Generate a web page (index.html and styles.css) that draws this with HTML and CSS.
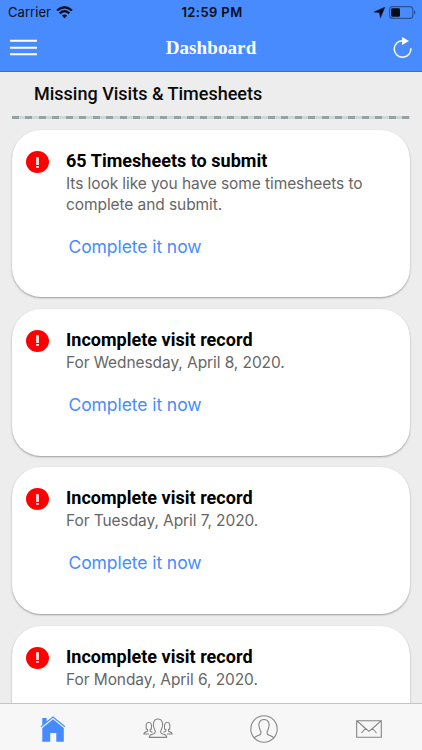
FILE: index.html
```html
<!DOCTYPE html>
<html lang="en">
<head>
<meta charset="utf-8">
<title>Dashboard</title>
<link rel="stylesheet" href="styles.css">
</head>
<body>
<div class="screen">
  <header class="header">
    <div class="status">
      <div class="status-left"><span class="carrier">Carrier</span>
        <svg class="wifi" width="17" height="13" viewBox="0 0 17 13" fill="none" stroke="#050b18" stroke-width="2.3"><path d="M1 4.5Q8.5-2 16 4.5M3.7 7.3Q8.5 3 13.3 7.3"/><path d="M8.5 12.3 5.8 9.6Q8.5 7.3 11.2 9.6Z" fill="#050b18" stroke="none"/></svg>
      </div>
      <span class="time">12:59 PM</span>
      <div class="status-right">
        <svg width="11" height="11" viewBox="0 0 11 11"><path d="M10.8.2 6.4 10.8 5.5 5.6.1 5Z" fill="#050b18" stroke="#050b18" stroke-width=".5"/></svg>
        <svg width="27" height="13" viewBox="0 0 27 13"><rect x=".6" y=".6" width="23.2" height="11.8" rx="3" fill="none" stroke="#2d538f" stroke-width="1.1"/><rect x="2.2" y="2.3" width="8.8" height="8.4" rx="1.3" fill="#050b18"/><path d="M25 4.3q3 2.2 0 4.4z" fill="#2d538f"/></svg>
      </div>
    </div>
    <div class="nav">
      <svg class="menu" width="27" height="17" viewBox="0 0 27 17" stroke="#fff" stroke-width="2"><path d="M0 1.7h27M0 8.7h27M0 15.3h27"/></svg>
      <h1 class="title">Dashboard</h1>
      <svg class="refresh" width="19" height="21" viewBox="0 0 19 21"><path d="M10.3 3.7A8.3 8.3 0 1 0 17.8 11.2" fill="none" stroke="#fff" stroke-width="1.5"/><path d="M9 0 16 4 9 8Z" fill="#fff"/></svg>
    </div>
  </header>
  <main class="content">
    <h2 class="heading"><span>Missing Visits &amp; Timesheets</span></h2>
    <div class="rule"></div>
    <section class="card card-tall">
      <span class="alert"><i class="bang"></i></span>
      <div class="body">
        <h3 class="name">65 Timesheets to submit</h3>
        <p class="text">Its look like you have some timesheets to<br>complete and submit.</p>
        <a class="link">Complete it now</a>
      </div>
    </section>
    <section class="card">
      <span class="alert"><i class="bang"></i></span>
      <div class="body">
        <h3 class="name">Incomplete visit record</h3>
        <p class="text">For Wednesday, April 8, 2020.</p>
        <a class="link">Complete it now</a>
      </div>
    </section>
    <section class="card">
      <span class="alert"><i class="bang"></i></span>
      <div class="body">
        <h3 class="name">Incomplete visit record</h3>
        <p class="text">For Tuesday, April 7, 2020.</p>
        <a class="link">Complete it now</a>
      </div>
    </section>
    <section class="card">
      <span class="alert"><i class="bang"></i></span>
      <div class="body">
        <h3 class="name">Incomplete visit record</h3>
        <p class="text">For Monday, April 6, 2020.</p>
      </div>
    </section>
  </main>
  <footer class="tabs">
    <div class="tab"><svg width="26" height="26" viewBox="0 0 26 26"><path d="M1 10.7 13 1 25 10.7" fill="none" stroke="#458aff" stroke-width="1.1"/><path d="M2.3 2h4.3v3.8L2.3 9.2ZM13 3.3 23.8 12V25.8H16.3V17H10.2V25.8H2.3V12Z" fill="#458aff"/></svg></div>
    <div class="tab"><svg width="30" height="21" viewBox="0 0 30 21" fill="none" stroke="#858585" stroke-width="1.1" stroke-linejoin="round"><path d="M6.2 19.4C6.5 16 8.5 16.8 11.4 15.4 12.7 14.7 12.5 13 11.7 11.7 9.2 7.5 10 1 15 1S20.8 7.5 18.3 11.7C17.5 13 17.3 14.7 18.6 15.4 21.5 16.8 23.5 16 23.8 19.4Z"/><path d="M6 16H.8C1 13.7 2.7 14.2 4.5 13.3V11.2H3.3C3 7.5 2.8 4.2 5.8 4.2S8.7 7.5 8.4 11.2H7.2V13.3L9.5 14.2M24 16H29.2C29 13.7 27.3 14.2 25.5 13.3V11.2H26.7C27 7.5 27.2 4.2 24.2 4.2S21.3 7.5 21.6 11.2H22.8V13.3L20.5 14.2"/></svg></div>
    <div class="tab"><svg width="28" height="28" viewBox="0 0 28 28" fill="none" stroke="#858585" stroke-width="1.1"><circle cx="14" cy="14" r="13.2"/><path d="M4.3 22.8C5.5 21 9.2 20.8 10.6 19.2 11.4 18 10.8 16.5 10.1 15 7.8 10 8.7 4.5 14 4.5S20.2 10 17.9 15C17.2 16.5 16.6 18 17.4 19.2 18.8 20.8 22.5 21 23.7 22.8"/></svg></div>
    <div class="tab"><svg width="26" height="18" viewBox="0 0 26 18" fill="none" stroke="#858585" stroke-width="1.1"><path d="M.7.7H25.3V17.3H.7ZM.7.7 9 8 13 11.3 17 8 25.3.7M9.5 8.5 5.5 13M16.5 8.5 20.5 13"/></svg></div>
  </footer>
</div>
</body>
</html>
```
FILE: styles.css
```css
* { box-sizing: border-box; }
body { margin: 0; }
h1, h2, h3, p { margin: 0; }
svg { display: block; flex: none; }
.screen { width: 422px; height: 750px; overflow: hidden; display: flex; flex-direction: column; background: #ededed; font-family: Roboto, "Liberation Sans", sans-serif; }
.header { height: 72px; flex: none; background: #488bff; border-bottom: 1px solid #3c70c8; }
.status { height: 24px; display: grid; grid-template-columns: 1fr auto 1fr; align-items: center; padding: 0 6px 0 8px; color: #050b18; font-family: Inter, sans-serif; font-size: 13px; }
.status-left { display: flex; align-items: center; gap: 5px; }
.status-right { display: flex; align-items: center; justify-content: flex-end; gap: 4px; }
.carrier { letter-spacing: .05px; }
.time { font-weight: 600; letter-spacing: .4px; }
.nav { height: 47px; display: grid; grid-template-columns: 1fr auto 1fr; align-items: center; padding: 0 10px 0 10px; }
.title { font: bold 19px/22px "Liberation Serif", serif; color: #fff; letter-spacing: .1px; }
.refresh { justify-self: end; margin-top: -1px; }
.content { flex: 1; min-height: 0; overflow: hidden; padding: 0 12px; }
.heading { height: 44px; padding-left: 22px; font-size: 18px; line-height: 44px; font-weight: 500; color: #0a0a0a; }
.rule { height: 3px; margin: 0 0 11px; background: repeating-linear-gradient(90deg, #98a2a4 0 7px, #d0d6d6 7px 13.46px); }
.card { display: flex; height: 147px; margin-bottom: 11.5px; padding: 20px 14px 0; border-radius: 29px; background: #fff; box-shadow: 0 1px 2px rgba(0,0,0,.35); }
.card-tall { height: 167px; }
.alert { width: 23px; height: 22px; margin: 1px 17px 0 0; border-radius: 50%; background: #fe0000; display: flex; align-items: center; justify-content: center; flex: none; }
.bang { width: 3px; height: 11px; border-radius: 1px; background: linear-gradient(#ffd0d0 0 8px, #fe0000 8px 9px, #ffd0d0 9px); }
.body { display: flex; flex-direction: column; align-items: flex-start; white-space: nowrap; }
.name { font-size: 18px; line-height: 22px; font-weight: 700; color: #000; letter-spacing: .02px; }
.text { font-family: Inter, sans-serif; font-size: 15.5px; line-height: 20.5px; color: #666; margin-top: 2.4px; letter-spacing: -.08px; }
.link { font-family: Inter, sans-serif; font-size: 17.5px; line-height: 22px; color: #488bff; margin: 20.6px 0 0 2.5px; letter-spacing: -.08px; }
.tabs { height: 47px; flex: none; display: grid; grid-template-columns: repeat(4, 1fr); background: #f7f7f7; border-top: 1px solid #c4c4c4; }
.tab { display: flex; align-items: center; justify-content: center; padding-top: 3px; }
```
